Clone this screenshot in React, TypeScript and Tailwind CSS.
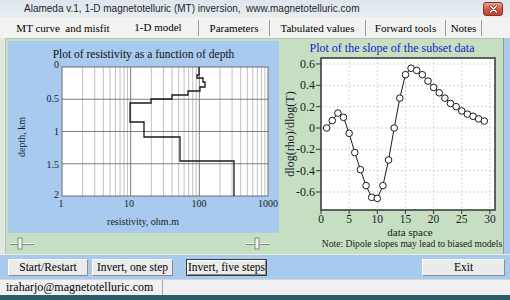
import React from "react";

const tabs = [
    { label: "MT curve\u00a0\u00a0and misfit", w: "w-[110px]", sep: false, active: false },
    { label: "1-D model", w: "w-[81px]", sep: true, active: true },
    { label: "Parameters", w: "w-[71px]", sep: true, active: false },
    { label: "Tabulated values", w: "w-[96px]", sep: true, active: false },
    { label: "Forward tools", w: "w-[80px]", sep: true, active: false },
    { label: "Notes", w: "w-[36px]", sep: true, active: false },
];

// resistivity plot: log x axis 1..1000, depth 0..2 km
const lx = (v: number) => 62 + Math.log10(v) * 68.67;
const dy = (d: number) => 67 + d * 64.5;

// slope plot
const sx = (v: number) => 321 + v * 5.63;
const sy = (v: number) => 128 - v * 106.7;

const slope = [
    0, 0.07, 0.14, 0.1, -0.05, -0.23, -0.39, -0.54, -0.65, -0.66, -0.54, -0.3, 0, 0.28, 0.5,
    0.56, 0.54, 0.5, 0.44, 0.38, 0.33, 0.28, 0.23, 0.2, 0.16, 0.13, 0.11, 0.085, 0.065,
];

function CloseButton() {
    return (
        <div className="flex h-[14px] w-[20px] items-center justify-center rounded-[3px] border border-[#8a3328] bg-gradient-to-b from-[#eba493] via-[#d75a45] to-[#c43f2f]">
            <svg width="9" height="8" viewBox="0 0 9 8">
                <path d="M1.5 1 L7.5 7 M7.5 1 L1.5 7" stroke="#5a1a12" strokeWidth="2.6" strokeLinecap="round" />
                <path d="M1.5 1 L7.5 7 M7.5 1 L1.5 7" stroke="#ffffff" strokeWidth="1.6" strokeLinecap="round" />
            </svg>
        </div>
    );
}

function Slider({ thumb }: { thumb: number }) {
    return (
        <svg width="24" height="13" viewBox="0 0 24 13">
            <line x1="0" y1="6.5" x2="24" y2="6.5" stroke="#f4f8f4" strokeWidth="1" />
            <line x1="0" y1="7.5" x2="24" y2="7.5" stroke="#7f8f7f" strokeWidth="1" />
            <rect x={thumb} y="1" width="4" height="11" fill="#f0f0f0" stroke="#6f7a6f" strokeWidth="0.8" />
        </svg>
    );
}

function DepthPlot() {
    const minor: number[] = [];
    [1, 10, 100].forEach((dec) => {
        for (let k = 2; k <= 9; k++) minor.push(lx(dec * k));
    });
    return (
        <svg width="271" height="172" viewBox="8 61 271 172" overflow="visible" className="block overflow-visible">
            <rect x="62" y="67" width="206" height="129" fill="#ffffff" />
            {minor.map((x) => (
                <line key={x} x1={x} y1="67" x2={x} y2="196" stroke="#b9b9b9" strokeWidth="0.9" />
            ))}
            {[10, 100].map((v) => (
                <line key={v} x1={lx(v)} y1="67" x2={lx(v)} y2="196" stroke="#7c7c7c" strokeWidth="1" />
            ))}
            {[0.5, 1, 1.5].map((d) => (
                <line key={d} x1="62" y1={dy(d)} x2="268" y2={dy(d)} stroke="#7c7c7c" strokeWidth="1" />
            ))}
            <rect x="62" y="67" width="206" height="129" fill="none" stroke="#6c6c6c" strokeWidth="1" />
            <path
                d="M199,67 V75 H197 V78 H203 V82 H205 V87 H200 V91 H188 V95 H172 V99 H151 V103 H130 V122 H144 V137 H180 V161 H234 V196"
                fill="none"
                stroke="#1a1a1a"
                strokeWidth="1.3"
            />
            {[
                ["0", 68],
                ["0.5", 102],
                ["1", 135],
                ["1.5", 168],
                ["2", 198],
            ].map(([t, y]) => (
                <text key={t} x="59" y={y} fontSize="10" textAnchor="end" fill="#1a1a1a">
                    {t}
                </text>
            ))}
            {[
                ["1", 61],
                ["10", 129],
                ["100", 199],
                ["1000", 268],
            ].map(([t, x]) => (
                <text key={t} x={x} y="207" fontSize="10" textAnchor="middle" fill="#1a1a1a">
                    {t}
                </text>
            ))}
            <text x="143" y="225" fontSize="10" textAnchor="middle" fill="#1a1a1a">
                resistivity, ohm.m
            </text>
            <text x="25" y="137" fontSize="10" textAnchor="middle" fill="#1a1a1a" transform="rotate(-90 25 137)">
                depth, km
            </text>
        </svg>
    );
}

function SlopePlot() {
    const pts = slope.map((v, i) => [sx(i + 1), sy(v)]);
    const yTicks = [0.6, 0.4, 0.2, 0, -0.2, -0.4, -0.6];
    const xTicks = [0, 5, 10, 15, 20, 25, 30];
    return (
        <svg width="224" height="199" viewBox="279 55 224 199" className="block">
            <rect x="321" y="58" width="174" height="152" fill="#ffffff" />
            {yTicks.map((v) => (
                <line key={v} x1="321" y1={sy(v)} x2="495" y2={sy(v)} stroke="#c9c9c9" strokeWidth="0.8" strokeDasharray="2 2" />
            ))}
            {xTicks.slice(1).map((v) => (
                <line key={v} x1={sx(v)} y1="58" x2={sx(v)} y2="210" stroke="#c9c9c9" strokeWidth="0.8" strokeDasharray="2 2" />
            ))}
            <rect x="321" y="58" width="174" height="152" fill="none" stroke="#2e3a2e" strokeWidth="1.5" />
            {yTicks.map((v) => (
                <g key={v}>
                    <line x1="316" y1={sy(v)} x2="321" y2={sy(v)} stroke="#2e3a2e" strokeWidth="1" />
                    <text x="315" y={sy(v) + 4} fontSize="12" textAnchor="end" fill="#1a1a1a">
                        {v === 0 ? "0" : v.toFixed(1)}
                    </text>
                </g>
            ))}
            {xTicks.map((v) => (
                <g key={v}>
                    <line x1={sx(v)} y1="210" x2={sx(v)} y2="214" stroke="#2e3a2e" strokeWidth="1" />
                    <text x={sx(v)} y="222.5" fontSize="11.5" textAnchor="middle" fill="#1a1a1a">
                        {v}
                    </text>
                </g>
            ))}
            <polyline points={pts.map((p) => p.join(",")).join(" ")} fill="none" stroke="#1a1a1a" strokeWidth="1" />
            {pts.map(([x, y], i) => (
                <circle key={i} cx={x} cy={y} r="3.3" fill="#ffffff" stroke="#1a1a1a" strokeWidth="1" />
            ))}
            <text x="410" y="235.5" fontSize="11" textAnchor="middle" fill="#1a1a1a">
                data space
            </text>
            <text x="412" y="247" fontSize="9.6" textAnchor="middle" fill="#1a1a1a">
                Note: Dipole slopes may lead to biased models
            </text>
            <text x="290" y="138" fontSize="12" textAnchor="middle" fill="#1a1a1a" transform="rotate(-90 290 134)">
                dlog(rho)/dlog(T)
            </text>
        </svg>
    );
}

function Btn({ label, w, focus }: { label: string; w: string; focus?: boolean }) {
    return (
        <button
            className={`${w} h-[17px] bg-[#ebebeb] text-[11.5px] leading-none text-black ${
                focus
                    ? "border border-[#3a3a3a] shadow-[inset_1px_1px_0_#ffffff,inset_-1px_-1px_0_#8a8a8a]"
                    : "border border-t-[#fdfdfd] border-l-[#fdfdfd] border-r-[#8c8c8c] border-b-[#8c8c8c]"
            }`}
        >
            {label}
        </button>
    );
}

export default function App() {
    return (
        <div className="flex h-[300px] w-[510px] flex-col overflow-hidden bg-[#e3e9e4] font-['Liberation_Serif','Times_New_Roman',serif] text-black">
            {/* title bar */}
            <div className="flex h-[17px] shrink-0 items-center bg-gradient-to-b from-[#dde6ee] to-[#e8edef] pl-[24px] pr-[7px]">
                <span className="flex-1 whitespace-pre font-['Liberation_Sans',Arial,sans-serif] text-[10px] text-[#1e1e1e]">
                    Alameda v.1, 1-D magnetotelluric (MT) inversion,  www.magnetotelluric.com
                </span>
                <CloseButton />
            </div>

            {/* tab headers */}
            <div className="flex h-[21px] shrink-0 bg-[#f2f3f1] pl-[8px] pt-[3px] pb-[2px] text-[11px] leading-[16px]">
                {tabs.map((t) => (
                    <div
                        key={t.label}
                        className={`${t.w} text-center ${t.sep ? "border-r border-[#9c9c9c]" : ""} ${
                            t.active ? "pb-[2px] leading-[14px]" : ""
                        }`}
                    >
                        {t.label}
                    </div>
                ))}
            </div>

            {/* tab page */}
            <div className="flex h-[216px] shrink-0">
                <div className="w-[5px] bg-[#e1e8df]" />
                <div className="flex flex-1 border-l border-t border-[#b3c3b1] bg-[#c6dfc3]">
                    <div className="flex w-[273px] flex-col pl-[2px] pt-[2px]">
                        <div className="flex h-[192px] flex-col bg-[#a8caee] pt-[6px]">
                            <div className="h-[14px] text-center text-[11.5px] leading-[14px] text-[#111]">
                                Plot of resistivity as a function of depth
                            </div>
                            <DepthPlot />
                        </div>
                        <div className="flex flex-1 items-center justify-between pl-[2px] pr-[9px]">
                            <Slider thumb={8} />
                            <Slider thumb={9} />
                        </div>
                    </div>
                    <div className="flex w-[224px] flex-col pt-[2px]">
                        <div className="h-[14px] pl-[2px] text-center text-[12px] leading-[14px] text-[#2020c4]">
                            Plot of the slope of the subset data
                        </div>
                        <SlopePlot />
                    </div>
                </div>
                <div className="w-[7px] border-l border-[#8c9c8c] bg-[#a9c9ec]" />
            </div>

            {/* button bar */}
            <div className="flex h-[25px] shrink-0 items-start gap-[4px] border-t border-[#e6eee6] bg-[#a8caee] pl-[8px] pr-[5px] pt-[4px]">
                <Btn label="Start/Restart" w="w-[80px]" />
                <Btn label="Invert, one step" w="w-[81px]" />
                <div className="w-[5px]" />
                <Btn label="Invert, five steps" w="w-[81px]" focus />
                <div className="flex-1" />
                <Btn label="Exit" w="w-[83px]" />
            </div>

            {/* status bar */}
            <div className="flex h-[16px] shrink-0 border-t border-[#d4d4d4] bg-[#f0f0f0] text-[12px] leading-[15px]">
                <div className="w-[163px] border-r border-[#a8a8a8] pl-[6px]">iraharjo@magnetotelluric.com</div>
            </div>
            <div className="h-[5px] shrink-0 bg-[#2c5b6c]" />
        </div>
    );
}
